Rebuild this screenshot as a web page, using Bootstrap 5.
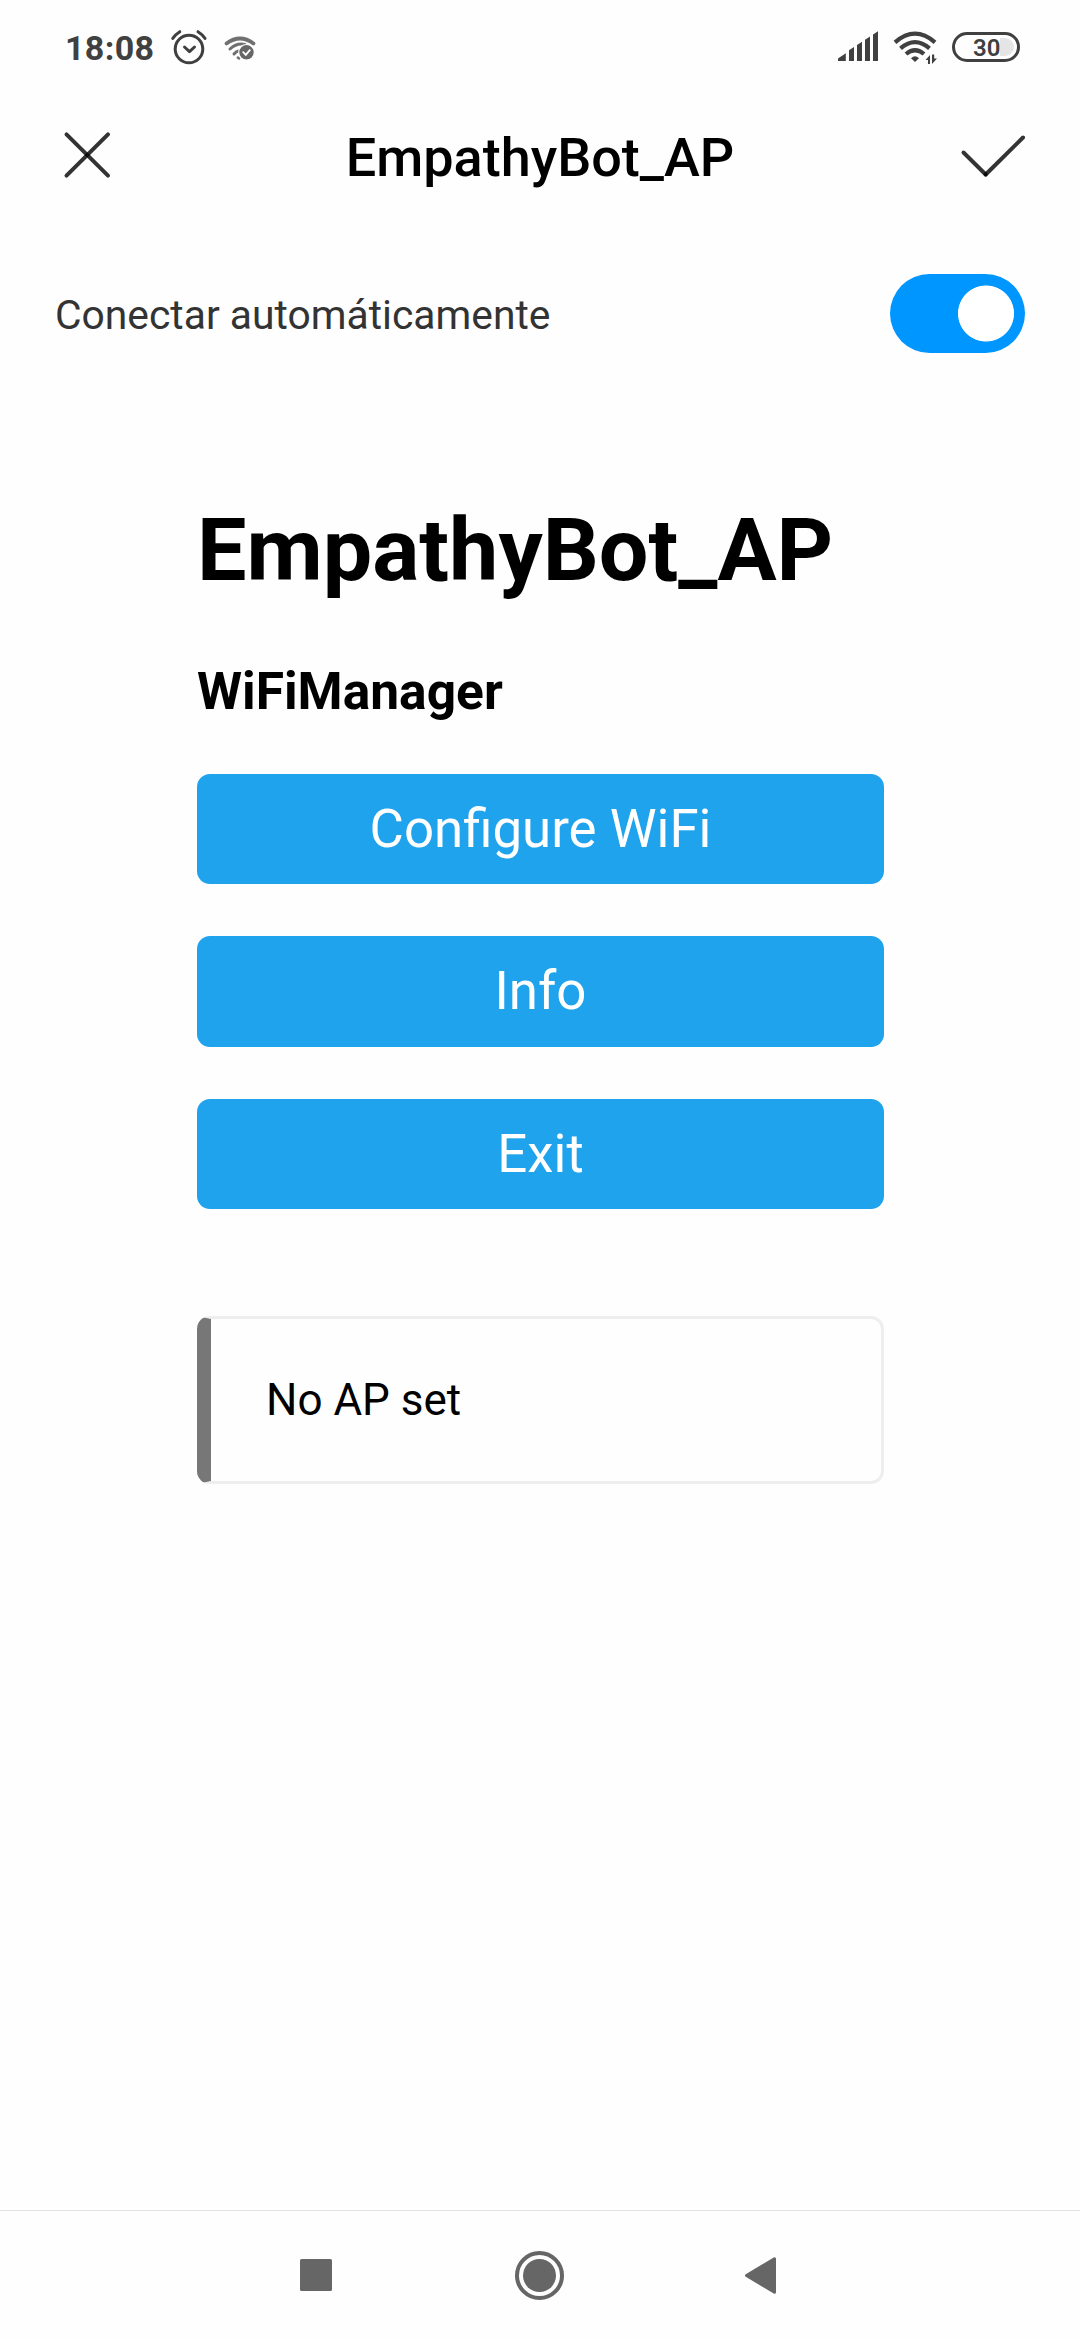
<!DOCTYPE html>
<html lang="es">
<head>
<meta charset="utf-8">
<meta name="viewport" content="width=device-width, initial-scale=1">
<title>EmpathyBot_AP</title>
<link href="https://cdn.jsdelivr.net/npm/bootstrap@5.3.0/dist/css/bootstrap.min.css" rel="stylesheet">
<style>
  body { font-family: Roboto, "Liberation Sans", sans-serif; background: #fefefe; color: #000; }
  svg { display: block; flex: none; }
  .phone { width: 1080px; height: 2340px; }
  .status-bar { height: 96px; padding-left: 65px; padding-right: 56px; color: #404040; }
  .clock { width: 100px; font-size: 34px; font-weight: 700; line-height: 97px; letter-spacing: .35px; }
  .title-bar { height: 124px; padding: 0 50px; }
  .title-bar h1 { font-size: 54px; font-weight: 500; line-height: 124px; }
  .icon-btn { background: none; border: 0; padding: 0; }
  .auto-row { height: 186px; padding: 0 55px 0 55px; }
  .auto-row label { font-size: 40.8px; color: #333; line-height: 60px; padding-top: 4px; }
  .switch-pill.form-check-input { width: 135px; height: 79px; margin: 0; border: 0; border-radius: 40px; }
  .switch-pill.form-check-input:checked { background-color: #0096ff;
    background-image: radial-gradient(circle at 96px 50%, #fff 27.6px, #0096ff 28.4px); background-size: 100% 100%; }
  .portal { width: 687px; margin-left: 197px; padding-top: 92px; }
  .portal h2 { font-size: 88px; line-height: 104px; font-weight: 700; margin-bottom: 60px; }
  .portal h3 { font-size: 51.5px; line-height: 60px; font-weight: 700; margin-bottom: 52px; }
  .menu-list { gap: 52px; }
  .portal-btn.btn { height: 110px; padding: 0; border: 0; border-radius: 13px; background: #1fa3ec; color: #fff; font-size: 52.8px; line-height: 109px; }
  .portal-btn.btn:nth-child(2) { height: 111px; }
  .msg-box { margin-top: 107px; height: 168px; padding-left: 55px; border: 3px solid #eee; border-left: 14px solid #777; border-radius: 13px; font-size: 44px; line-height: 163px; }
  .nav-keys { height: 130px; border-top: 1px solid #e3e3e3; padding: 0 300px; color: #666; }
</style>
<script src="https://cdn.jsdelivr.net/npm/bootstrap@5.3.0/dist/js/bootstrap.bundle.min.js"></script>
</head>
<body>
<div class="phone d-flex flex-column overflow-hidden">
  <div class="status-bar d-flex justify-content-between">
    <div class="d-flex">
      <div class="clock">18:08</div>
      <svg width="50" height="96" viewBox="165 0 50 96" fill="none" stroke="currentColor" stroke-linecap="round" stroke-linejoin="round">
        <circle cx="189" cy="49" r="13.8" stroke-width="3"/>
        <path d="M184.5 47l5 4.700 5-4.700" stroke-width="3"/>
        <path d="M172.800 38.400q2.800-4.100 7-6.700M205 38.400q-2.800-4.100-7-6.700" stroke-width="3"/>
      </svg>
      <svg width="45" height="96" viewBox="215 0 45 96" fill="none" stroke="#707070" stroke-linecap="round">
        <path d="M226.500 43.500Q240 33.500 253.500 43.500" stroke-width="3.700"/>
        <path d="M230 49Q237 42.500 245 44.500" stroke-width="3"/>
        <path d="M234 54Q236 51.500 238.500 51" stroke-width="3"/>
        <path d="M237.800 57.500l1.200 1" stroke-width="2.500"/>
        <circle cx="246.500" cy="52.300" r="7.800" fill="#666" stroke="#fefefe" stroke-width="1.200"/>
        <path d="M243.200 52.200l2.600 2.600 4-4.600" stroke="#fff" stroke-width="1.900"/>
      </svg>
    </div>
    <div class="d-flex">
      <svg width="52" height="96" viewBox="834 0 52 96" fill="currentColor">
        <path d="M838 61v-2.500l7.800-5.300V61zM849 61V50.300l5-3.300V61zM857 61V45l5-3.300V61zM865 61V39.700l5-3.300V61zM873 61V34.400l5-3.200V61z"/>
      </svg>
      <svg width="60" height="96" viewBox="886 0 60 96" fill="none" stroke="currentColor" stroke-width="4.200">
        <path d="M895 42.300Q915 25 935 42.300M900.500 48.300Q915 36 929.500 48.300M906 54Q915 46.500 924 54"/>
        <path d="M911 58.300Q915 54.200 919 58.300L915 62z" fill="currentColor" stroke="none"/>
        <path d="M925.500 60l4.500-5V64h-2v-4zM932 54.500h2.200v4h2.800l-5 5.500z" fill="currentColor" stroke="none"/>
      </svg>
      <svg width="78" height="96" viewBox="946 0 78 96">
        <path d="M1000 38h5a9 9 0 0 1 0 18h-5z" fill="#e5e5e5"/>
        <rect x="953.500" y="33.500" width="65" height="27" rx="13.500" fill="none" stroke="currentColor" stroke-width="3"/>
        <text x="973" y="55.700" font-size="24" font-weight="600" fill="currentColor">30</text>
      </svg>
    </div>
  </div>

  <header class="title-bar d-flex justify-content-between">
    <button class="icon-btn" aria-label="Cerrar">
      <svg width="80" height="124" viewBox="50 96 80 124" stroke="#000" stroke-opacity=".8" stroke-width="4" stroke-linecap="round">
        <line x1="66.500" y1="134.300" x2="108" y2="175.700"/><line x1="108" y1="134.300" x2="66.500" y2="175.700"/>
      </svg>
    </button>
    <h1 class="m-0">EmpathyBot_AP</h1>
    <button class="icon-btn" aria-label="Aceptar">
      <svg width="80" height="124" viewBox="950 96 80 124" stroke="#000" stroke-opacity=".8" stroke-width="4" stroke-linecap="round">
        <line x1="963.500" y1="152.500" x2="985.700" y2="174.500"/><line x1="985.700" y1="174.500" x2="1023" y2="137.500"/>
      </svg>
    </button>
  </header>

  <div class="auto-row d-flex align-items-center justify-content-between">
    <label for="auto">Conectar automáticamente</label>
    <div class="form-switch p-0 d-flex"><input class="form-check-input switch-pill" type="checkbox" role="switch" id="auto" checked></div>
  </div>

  <main class="portal flex-grow-1">
    <h2>EmpathyBot_AP</h2>
    <h3>WiFiManager</h3>
    <div class="menu-list d-flex flex-column">
      <button class="btn portal-btn">Configure WiFi</button>
      <button class="btn portal-btn">Info</button>
      <button class="btn portal-btn">Exit</button>
    </div>
    <div class="msg-box">No AP set</div>
  </main>

  <nav class="nav-keys d-flex justify-content-between">
    <svg width="32" height="129" viewBox="300 2211 32 129" fill="currentColor"><rect x="300" y="2259" width="32" height="32" rx="1.500"/></svg>
    <svg width="52" height="129" viewBox="512 2211 52 129" fill="currentColor"><circle cx="539.500" cy="2275.500" r="22.500" fill="none" stroke="currentColor" stroke-width="4"/><circle cx="539.500" cy="2275.500" r="16.500"/></svg>
    <svg width="36" height="129" viewBox="744 2211 36 129" fill="currentColor" stroke="currentColor" stroke-width="3" stroke-linejoin="round"><path d="M746.500 2275.500L774.500 2258.800V2292.200z"/></svg>
  </nav>
</div>
</body>
</html>
